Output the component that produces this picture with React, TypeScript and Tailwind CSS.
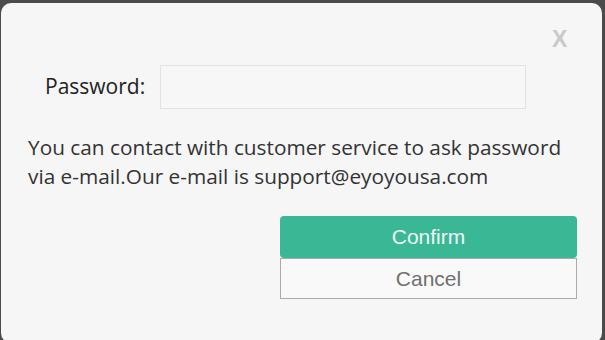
export default function App() {
  return (
    <div className="h-[340px] w-[605px] overflow-hidden bg-[#4b4b4b] pl-px pt-[3px]">
      <div className="relative h-[340px] w-[601px] rounded-[10px] bg-[#f6f6f6] font-['Open_Sans',sans-serif]">
        <button
          type="button"
          className="absolute left-[551px] top-[25px] font-['Liberation_Sans',sans-serif] text-[23px] font-bold leading-none text-[#c9c9c9]"
        >
          X
        </button>

        <div className="flex items-center pl-[44px] pt-[62px]">
          <label className="w-[115px] text-[21px] text-[#222]">Password:</label>
          <input
            type="password"
            className="h-[44px] w-[366px] border border-[#e2e2e2] bg-[#f7f7f7] outline-none"
          />
        </div>

        <p className="mt-[24px] pl-[27px] pr-[10px] text-[20.8px] leading-[29px] text-[#333]">
          You can contact with customer service to ask password
          <br />
          via e-mail.Our e-mail is support@eyoyousa.com
        </p>

        <div className="ml-[279px] mt-[25px] flex w-[297px] flex-col font-['Liberation_Sans',sans-serif] text-[21px]">
          <button
            type="button"
            className="h-[42px] rounded-[4px] bg-[#3ab795] text-[#eefbf6]"
          >
            Confirm
          </button>
          <button
            type="button"
            className="h-[41px] border border-[#ababab] bg-[#f9f9f9] text-[#707070]"
          >
            Cancel
          </button>
        </div>
      </div>
    </div>
  );
}
